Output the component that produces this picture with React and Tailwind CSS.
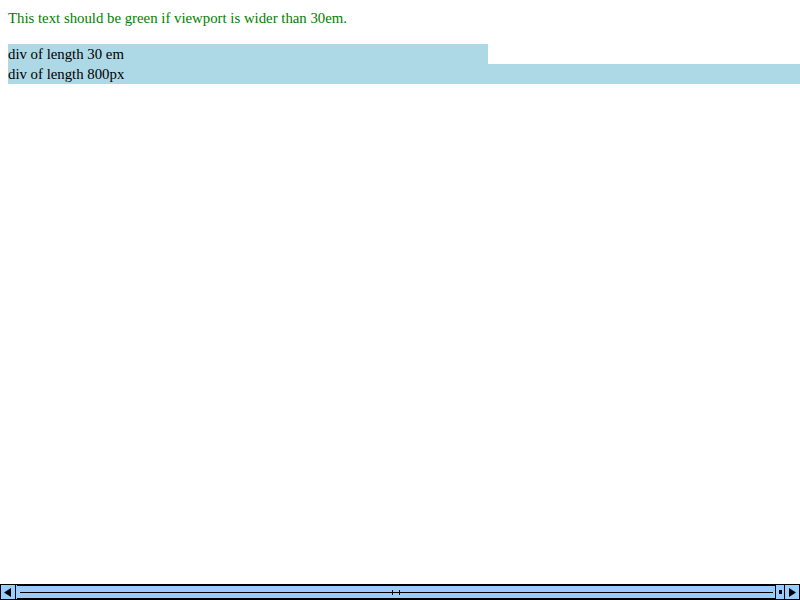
export default function App() {
  return (
    <div className="flex h-screen w-full flex-col overflow-hidden bg-white font-['Liberation_Serif','Times_New_Roman',serif]">
      <div className="flex-1 overflow-hidden p-2 text-[14.8px] leading-5 text-black">
        <p className="text-[#008000]">This text should be green if viewport is wider than 30em.</p>
        <div className="mt-4 w-[480px] bg-[#add8e6]">div of length 30 em</div>
        <div className="w-[800px] shrink-0 bg-[#add8e6]">div of length 800px</div>
      </div>
      <div className="flex h-4 w-full bg-[#99ccff]">
        <div className="flex h-4 w-4 items-center justify-center border border-black bg-[#99ccff]">
          <svg width="8" height="9" viewBox="0 0 8 9"><polygon points="0,4.5 7,0 7,9" fill="black" /></svg>
        </div>
        <div className="flex flex-1 items-center border-y border-black pl-px">
          <div className="flex h-[14px] flex-1 flex-col justify-center border-y border-r border-black pl-[3px] pr-[2px]">
            <div className="relative h-px w-full bg-black">
              <div className="absolute left-[372px] top-[-2px] h-[5px] w-px bg-black" />
              <div className="absolute left-[379px] top-[-2px] h-[5px] w-px bg-black" />
            </div>
          </div>
          <div className="flex w-[8px] items-center justify-center">
            <div className="h-[4px] w-[3px] bg-black" />
          </div>
        </div>
        <div className="flex h-4 w-4 items-center justify-center border border-black bg-[#99ccff]">
          <svg width="8" height="9" viewBox="0 0 8 9"><polygon points="8,4.5 1,0 1,9" fill="black" /></svg>
        </div>
      </div>
    </div>
  );
}
